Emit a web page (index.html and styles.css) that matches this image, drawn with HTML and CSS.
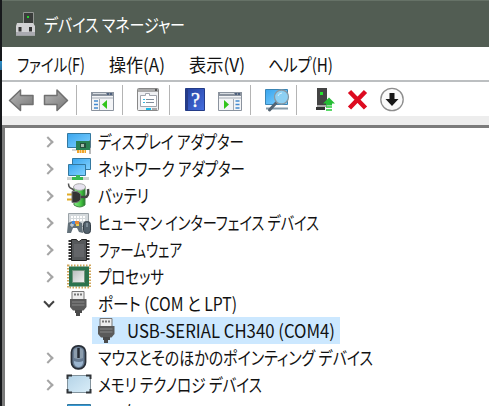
FILE: index.html
```html
<!DOCTYPE html>
<html lang="ja">
<head>
<meta charset="utf-8">
<title>デバイス マネージャー</title>
<link rel="stylesheet" href="styles.css">
</head>
<body>
<svg class="defs" width="0" height="0">
  <defs>
    <linearGradient id="screen" x1="0" y1="0" x2="1" y2="1"><stop offset="0" stop-color="#39a5ee"/><stop offset="1" stop-color="#83d2ff"/></linearGradient>
    <linearGradient id="metal" x1="0" y1="0" x2="1" y2="1"><stop offset="0" stop-color="#b8b8b8"/><stop offset="1" stop-color="#777"/></linearGradient>
    <linearGradient id="pale" x1="0" y1="0" x2="1" y2="1"><stop offset="0" stop-color="#b4d3e7"/><stop offset="1" stop-color="#d9edf8"/></linearGradient>
    <linearGradient id="navy" x1="0" y1="0" x2="1" y2="1"><stop offset="0" stop-color="#233f9d"/><stop offset="1" stop-color="#466fe0"/></linearGradient>
    <linearGradient id="silver" x1="0" y1="0" x2="1" y2="1"><stop offset="0" stop-color="#b9bdbd"/><stop offset="1" stop-color="#f1f3f3"/></linearGradient>
    <linearGradient id="cell" x1="0" x2="1"><stop offset="0" stop-color="#8be88b"/><stop offset=".6" stop-color="#48c944"/><stop offset="1" stop-color="#23802a"/></linearGradient>
    <symbol id="plug" viewBox="0 0 26 27">
      <path d="M6 1.500h12v8H6z" fill="#eee" stroke="#777"/>
      <path d="M8 3.500h2v2H8zm3 0h2v2h-2zm3 0h2v2h-2z" fill="#777"/>
      <path d="M4 9h16.500v8l-3 3.500H7L4 17z" fill="#5a5a5a"/>
      <path d="M6 12h12.500M6 15h12.500" stroke="#888"/>
      <path d="M9 20h7v3h-2v3h-4v-3H9z" fill="#4a4a4a"/>
    </symbol>
  </defs>
</svg>
<div class="window">
  <header class="titlebar">
    <svg class="app-icon" width="22" height="26" viewBox="0 0 22 26">
      <path d="M8.500 1.500h10v13h-10z" fill="#3a3d3b" stroke="#929692"/><path d="M12 5h2v2h-2z" fill="#25d62d"/>
      <path d="M2 12h16l2 3v9.500H1V15z" fill="#d2d2d4"/><path d="M1 21h19v3.500H1z" fill="#aaaab0"/>
      <path d="M3.500 16h3v4.500h-3zM14 16h3v4.500h-3z" fill="#333"/>
    </svg>
    <span class="fit title" data-width="141">デバイス マネージャー</span>
  </header>
  <nav class="menu">
    <span class="fit file" data-width="68">ファイル(F)</span>
    <span class="fit action" data-width="56">操作(A)</span>
    <span class="fit view" data-width="56">表示(V)</span>
    <span class="fit" data-width="65">ヘルプ(H)</span>
  </nav>
  <div class="toolbar">
    <svg width="487" height="34" viewBox="2 82 487 34">
      <g fill="url(#metal)" stroke="#707070" stroke-width="1.500" stroke-linejoin="round">
        <path d="M9.500 100.500 20.500 90v5.500H33v9H20.500v6z"/>
        <path d="M67.500 100.500 57 90v5.500H44.500v9H57v6z"/>
      </g>
      <path d="M76.500 85v30M122.500 85v30M169.500 85v30M250.500 85v30M296.500 85v30" stroke="#b4b4b4"/>
      <g>
        <path d="M91.500 92.500h22v18h-22z" fill="#f4f5f7" stroke="#8b939e"/>
        <path d="M91 92h23v4H91z" fill="#8b939e"/><path d="M93 93.500h13" stroke="#d7dce1"/><path d="M107 93h2v2h-2zm3 0h2v2h-2z" fill="#4e617e"/>
        <path d="M92 98h21M99.500 99v11" stroke="#a4abb4"/>
        <path d="M94 101h4m-4 3.500h4m-4 3.500h4" stroke="#438ad0" stroke-width="1.500"/>
        <path d="M102 104.500l5-4.500v9z" fill="#32c51b"/>
      </g>
      <g>
        <rect x="137.500" y="88.500" width="21" height="22" rx="1" fill="#f0f1f3" stroke="#888"/>
        <path d="M138 90.500h20" stroke="#aaa" stroke-width="3"/><path d="M155 89h2v2h-2z" fill="#555"/>
        <path d="M140.500 95.500h5v-2h4v2h7v11h-16z" fill="#fff" stroke="#a1a5ad"/>
        <path d="M146 99.500h8m-8 3h8" stroke="#828d9a"/><path d="M143 99.500h2m-2 3h2" stroke="#36b8df"/>
        <path d="M146 109h5" stroke="#19b9e8" stroke-width="2"/><path d="M152 109h5" stroke="#aaa" stroke-width="2"/>
      </g>
      <path d="M185.500 88.500h19v22h-19z" fill="url(#navy)" stroke="#233b87"/><path d="M187 89v21" stroke="#253b89" stroke-width="2"/>
      <text class="help" x="191" y="107">?</text>
      <g>
        <path d="M218.500 92.500h23v18h-23z" fill="#f4f5f7" stroke="#8b939e"/>
        <path d="M218 92h24v4h-24z" fill="#8b939e"/><path d="M220 93.500h14" stroke="#d7dce1"/><path d="M235 93h2v2h-2zm3 0h2v2h-2z" fill="#4e617e"/>
        <path d="M219 98h22M233.500 99v11" stroke="#a4abb4"/>
        <path d="M235.500 101h4m-4 3.500h4m-4 3.500h4" stroke="#438ad0" stroke-width="1.500"/>
        <path d="M224 100l5 4.500-5 4.500z" fill="#32c51b"/>
      </g>
      <g>
        <path d="M265.500 89.500h22v15h-22z" fill="url(#screen)" stroke="#3985b5"/>
        <path d="M266 108.500h22" stroke="#859aa8" stroke-width="2"/>
        <path d="M269.500 110l7-7.500" stroke="#536371" stroke-width="3" stroke-linecap="round"/>
        <circle cx="281.500" cy="97" r="7" fill="#8dd0f3" stroke="#8999a4" stroke-width="1.300"/><path d="M278 96q1-3 4-3" stroke="#d8f2ff" fill="none"/>
      </g>
      <g>
        <path d="M317 88h10v17h-10z" fill="#444"/><path d="M316 107h9v3h-9z" fill="#333"/><path d="M317 105h10v2h-10z" fill="#aaa"/><path d="M320 92h3v3h-3z" fill="#24e52d"/>
        <path d="M329 97.500l6 6h-3v2h-6v-2h-3z" fill="#26bd35"/><path d="M326 107h6m-6 3h6" stroke="#27cc39" stroke-width="1.700"/>
      </g>
      <path d="M349.500 91.500l16 16.500m0-16.500-16 16.500" stroke="#dd0b20" stroke-width="4.500"/>
      <circle cx="392" cy="99.500" r="11.200" fill="#fafafa" stroke="#8d8d8d" stroke-width="1.300"/>
      <path d="M389.500 93h5v6h4l-6.500 7-6.500-7h4z" fill="#171717"/>
    </svg>
  </div>
  <div class="strip"></div>
  <main class="tree">
    <div class="row"><i class="chevron"></i>
      <svg class="icon" viewBox="0 0 26 27"><path d="M1.500 5.500h23v14h-23z" fill="url(#screen)" stroke="#34789f"/><path d="M24 12v14" stroke="#777"/><path d="M6 22h7" stroke="#aaa"/><path d="M10 13h14v9H10z" fill="#2a8052"/><path d="M14 15h6v5h-6z" fill="#274e3b"/><path d="M15 16h3v3h-3z" fill="#a3bca9"/><path d="M11 23.500h9" stroke="#f0a52b" stroke-width="3" stroke-dasharray="2 .5"/></svg>
      <span class="fit" data-width="146">ディスプレイ アダプター</span></div>
    <div class="row"><i class="chevron"></i>
      <svg class="icon" viewBox="0 0 26 27"><path d="M6.500 3.500h18v11h-18z" fill="url(#screen)" stroke="#34789f"/><path d="M2.500 9.500h17v11h-17z" fill="url(#screen)" stroke="#34789f"/><path d="M1 22h22v3H1z" fill="#cfd3d0"/><path d="M10 20h4v2h3v3H6v-3h4z" fill="#37b951"/></svg>
      <span class="fit" data-width="147">ネットワーク アダプター</span></div>
    <div class="row"><i class="chevron"></i>
      <svg class="icon" viewBox="0 0 26 27"><path d="M8 5q6-3 11 0v18q-5 4-11 0z" fill="url(#cell)" stroke="#438544"/><ellipse cx="13.500" cy="5" rx="6" ry="3.300" fill="#e6e3ef" stroke="#aaa"/><path d="M2.500 1.500q0 4 3 5t3 6" fill="none" stroke="#555" stroke-width="1.500"/><path d="M1 12.500h6m-6 5h6" stroke="#dfab27" stroke-width="2"/><path d="M6 9.500q9-1 9 5.500t-9 5.500z" fill="#333" stroke="#777"/><path d="M15 15h4q4 0 3-8" fill="none" stroke="#444" stroke-width="2.500"/></svg>
      <span class="fit" data-width="51">バッテリ</span></div>
    <div class="row"><i class="chevron"></i>
      <svg class="icon" viewBox="0 0 26 27"><path d="M2.500 4.500h20v13h-20z" fill="#d4d9dc" stroke="#9ba3a8"/><path d="M5 8h15M5 11h15" stroke="#fff" stroke-width="2" stroke-dasharray="2 1"/><path d="M2 14q7-4 14 0l1 10-4-1-2-4H7l-2 5H1z" fill="#63717a"/><path d="M4 16h4m-2-2v4" stroke="#dae4ed"/><path d="M6 12h3v3H6z" fill="#4088df"/><path d="M9 12h4v3H9z" fill="#e88837"/><path d="M10 15h3v2h-3z" fill="#e7cf49"/><rect x="17.500" y="12.500" width="7" height="12" rx="3" fill="#53616c" stroke="#333d46"/><path d="M21 14v4" stroke="#a9b9c4"/></svg>
      <span class="fit" data-width="221">ヒューマン インターフェイス デバイス</span></div>
    <div class="row"><i class="chevron"></i>
      <svg class="icon" viewBox="0 0 26 27"><path d="M4 4v21M22 4v21" stroke="#333" stroke-width="3" stroke-dasharray="2 1"/><path d="M5.500 3.500h5q2 4 5 0h5v21h-15z" fill="#55585a" stroke="#222"/><path d="M8 8h10v13H8z" fill="#636568"/></svg>
      <span class="fit" data-width="84">ファームウェア</span></div>
    <div class="row"><i class="chevron"></i>
      <svg class="icon" viewBox="0 0 26 27"><path d="M2 2.500h22v22H2z" fill="none" stroke="#d0a65a" stroke-width="2" stroke-dasharray="1.500 1.500"/><path d="M3 3.500h20v20H3z" fill="#2b734d"/><path d="M6.500 7.500h12v12h-12z" fill="url(#silver)" stroke="#72947e"/></svg>
      <span class="fit" data-width="66">プロセッサ</span></div>
    <div class="row"><i class="chevron open"></i>
      <svg class="icon" viewBox="0 0 26 27"><use href="#plug"/></svg>
      <span class="fit" data-width="139">ポート (COM と LPT)</span></div>
    <div class="row child"><div class="selected">
      <svg class="icon" viewBox="0 0 26 27"><use href="#plug"/></svg>
      <span class="fit" data-width="208">USB-SERIAL CH340 (COM4)</span></div></div>
    <div class="row"><i class="chevron"></i>
      <svg class="icon" viewBox="0 0 26 27"><rect x="5.500" y="1.800" width="14" height="23" rx="6.500" fill="#667a91" stroke="#292f38" stroke-width="1.800"/><path d="M8 17q5 2 9 0v2q-1 4-4.500 4T8 19z" fill="#9bb5cf"/><path d="M8 7q0-3 4.500-3T17 7v7q-4 2-9 0z" fill="#8c9dad"/><path d="M12.500 4v10" stroke="#252b34" stroke-width="2.500"/></svg>
      <span class="fit" data-width="275">マウスとそのほかのポインティング デバイス</span></div>
    <div class="row"><i class="chevron"></i>
      <svg class="icon" viewBox="0 0 26 27"><rect x="1.500" y="4.500" width="23" height="17" rx="1" fill="url(#pale)" stroke="#82939d"/><path d="M1.500 8V4.500H6M20 4.500h4.500V8M1.500 18v3.500H6M20 21.500h4.500V18" fill="none" stroke="#303438" stroke-width="2"/></svg>
      <span class="fit" data-width="164">メモリ テクノロジ デバイス</span></div>
    <div class="row"><i class="chevron"></i>
      <svg class="icon" viewBox="0 0 26 27"><path d="M1.500 6.500h23v15h-23z" fill="#369bd8" stroke="#34789f"/></svg>
      <span class="fit" data-width="51">モニター</span></div>
  </main>
</div>
<script src="fit.js"></script>
</body>
</html>
```
FILE: styles.css
```css
* { box-sizing: border-box; }
body {
  margin: 0;
  width: 489px;
  height: 406px;
  overflow: hidden;
  background: #fff;
  color: #111;
  font: 18px/27px "Noto Sans", "Noto Sans CJK JP", sans-serif;
}
.defs { display: block; }
.window {
  height: 406px;
  overflow: hidden;
  border-left: 2px solid;
  border-image: linear-gradient(#17191c 62px, #2b8cc4 62px, #2b6f9f 71px, #17191c 71px) 1;
  border-width: 0 0 0 2px;
}
.fit {
  display: inline-block;
  flex: none;
  white-space: nowrap;
  font-family: "Noto Sans CJK JP", sans-serif;
  font-feature-settings: "palt";
  transform-origin: 0 50%;
}
.titlebar {
  display: flex;
  align-items: center;
  height: 47px;
  padding-left: 13px;
  border-top: 1px solid #667267;
  background: #525d53;
  color: #fff;
}
.app-icon { margin-right: 7px; }
.menu {
  display: flex;
  align-items: center;
  height: 33px;
  padding: 2px 0 0 15px;
}
.file, .action { margin-right: 24px; }
.view { margin-right: 23px; }
.toolbar {
  height: 36px;
  border-top: 2px solid #bcbfc1;
}
.toolbar svg { display: block; }
.help { font: 20px "Liberation Serif", serif; fill: #fff; stroke: #fff; stroke-width: .4px; }
.strip { height: 9px; background: #ededed; }
.tree {
  height: 281px;
  overflow: hidden;
  border-top: 3px solid #7b7b7b;
  border-left: 3px solid #7b7b7b;
}
.row {
  display: flex;
  align-items: center;
  height: 27px;
  padding-left: 39px;
}
.icon { width: 26px; height: 27px; flex: none; margin-right: 6px; }
.chevron {
  width: 8px;
  height: 8px;
  margin: 0 14px 0 0;
  border: solid #a5a5a5;
  border-width: 2px 2px 0 0;
  transform: rotate(45deg);
}
.chevron.open {
  border-color: #404040;
  transform: translate(1px, -2px) rotate(135deg);
}
.child { padding-left: 87px; }
.selected {
  display: flex;
  align-items: center;
  width: 248px;
  height: 27px;
  padding-left: 2px;
  background: #cce8ff;
}
.selected .icon { margin-right: 7px; }
```
FILE: fit.js
```js
// Condense each label horizontally to its allotted width.
document.querySelectorAll('.fit').forEach(label => {
  const target = Number(label.dataset.width);
  const natural = label.getBoundingClientRect().width;
  label.style.width = target + 'px';
  label.style.transform = `scaleX(${target / natural})`;
});
```
